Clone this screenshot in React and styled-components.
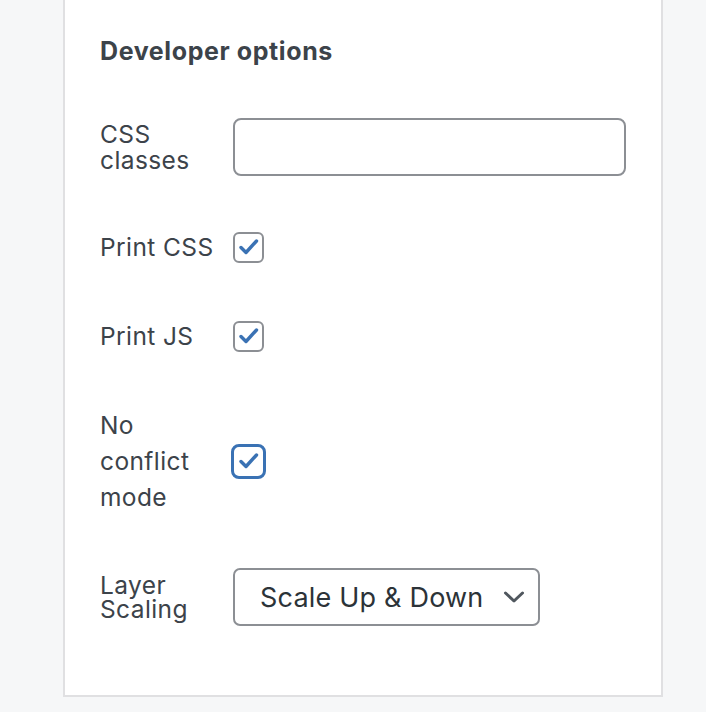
import React from 'react';
import styled, { createGlobalStyle } from 'styled-components';

const Global = createGlobalStyle`
    html, body {
        margin:0;
        padding:0;
        background:#f6f7f8;
    }
    body {
        font-family:'Inter', 'Noto Sans', sans-serif;
        color:#3c434a;
    }
`

const Page = styled.div`
    width:706px;
    height:712px;
    overflow:hidden;
    padding-left:63px;
    box-sizing:border-box;
`

const Card = styled.div`
    width:600px;
    box-sizing:border-box;
    background:#fff;
    border:2px solid #e0e0e2;
    border-top:none;
    padding:36px 0 69px 35px;
`

const Title = styled.h2`
    margin:0 0 52px;
    font-size:25px;
    font-weight:700;
    line-height:30px;
    letter-spacing:0.6px;
`

const Rows = styled.div`
    display:flex;
    flex-direction:column;
    gap:${props => props.gap}px;
`

const Row = styled.div`
    display:flex;
    align-items:center;
`

const Label = styled.div`
    width:133px;
    padding-right:8px;
    box-sizing:border-box;
    font-size:24.5px;
    letter-spacing:0.4px;
    line-height:${props => props.lh}px;
`

const TextInput = styled.input`
    width:393px;
    height:58px;
    box-sizing:border-box;
    border:2px solid #8c8f94;
    border-radius:8px;
    background:#fff;
    outline:none;
    padding:0 14px;
    font:inherit;
    font-size:24px;
`

const Box = styled.span`
    display:flex;
    align-items:center;
    justify-content:center;
    box-sizing:border-box;
    width:${props => props.focus ? 35 : 31}px;
    height:${props => props.focus ? 35 : 31}px;
    margin-left:${props => props.focus ? -2 : 0}px;
    border:${props => props.focus ? '3px solid #3a72b4' : '2px solid #8c8f94'};
    border-radius:${props => props.focus ? 8 : 6}px;
    background:#fff;
`

const Select = styled.div`
    width:307px;
    height:58px;
    box-sizing:border-box;
    border:2px solid #8c8f94;
    border-radius:7px;
    display:flex;
    align-items:center;
    justify-content:space-between;
    padding:0 13px 0 25px;
    font-size:27px;
    letter-spacing:0.2px;
    color:#2c3338;
`

function Check({ focus }) {
    return (
        <Box focus={focus}>
            <svg width="22" height="18" viewBox="0 0 22 18">
                <path d="M3 9.5 L8 14.5 L18.5 3" fill="none" stroke="#3a72b4" strokeWidth="3.4" strokeLinecap="round" strokeLinejoin="round" />
            </svg>
        </Box>
    );
}

function App() {
    return (
        <Page>
            <Global />
            <Card>
                <Title>Developer options</Title>
                <Rows gap={53}>
                    <Row>
                        <Label lh={26}>CSS classes</Label>
                        <TextInput type="text" />
                    </Row>
                    <Row>
                        <Label lh={36}>Print CSS</Label>
                        <Check />
                    </Row>
                    <Row>
                        <Label lh={36}>Print JS</Label>
                        <Check />
                    </Row>
                    <Row>
                        <Label lh={36}>No conflict mode</Label>
                        <Check focus />
                    </Row>
                    <Row>
                        <Label lh={24}>Layer Scaling</Label>
                        <Select>
                            <span>Scale Up &amp; Down</span>
                            <svg width="22" height="14" viewBox="0 0 22 14">
                                <path d="M2.5 3 L11 11 L19.5 3" fill="none" stroke="#50575e" strokeWidth="3" strokeLinecap="round" strokeLinejoin="round" />
                            </svg>
                        </Select>
                    </Row>
                </Rows>
            </Card>
        </Page>
    );
}

export default App;
